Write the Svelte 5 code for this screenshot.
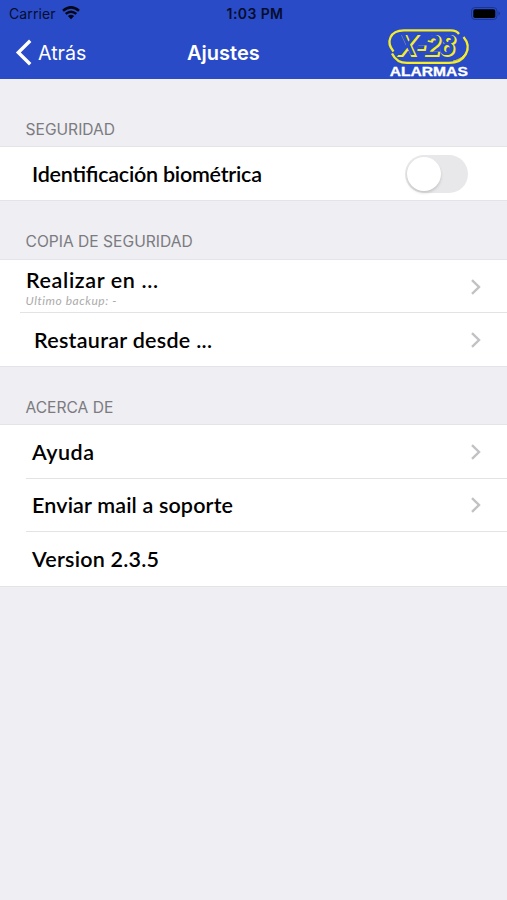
<script>
  const sections = [
    {
      title: 'SEGURIDAD',
      kind: 'security',
      rows: [{ label: 'Identificación biométrica', toggle: true, width: 230 }]
    },
    {
      title: 'COPIA DE SEGURIDAD',
      kind: 'backup',
      rows: [
        { label: 'Realizar en ...', detail: 'Ultimo backup: -', arrow: true, width: 132 },
        { label: 'Restaurar desde ...', arrow: true, width: 178 }
      ]
    },
    {
      title: 'ACERCA DE',
      kind: 'about',
      rows: [
        { label: 'Ayuda', arrow: true, width: 62 },
        { label: 'Enviar mail a soporte', arrow: true, width: 201 },
        { label: 'Version 2.3.5', width: 127 }
      ]
    }
  ];

  let biometric = $state(false);
</script>

<div class="screen">
  <header>
    <div class="status">
      <div class="carrier">
        <span>Carrier</span>
        <svg width="18" height="14" viewBox="0 0 18 14">
          <path d="M1 4.8Q9-2 17 4.8M3.7 7.9Q9 3.5 14.3 7.9" />
          <path class="solid" d="M5.9 10.1Q9 7.5 12.1 10.1L9 13.3Z" />
        </svg>
      </div>
      <span class="time">1:03 PM</span>
      <svg class="battery" width="30" height="14" viewBox="0 0 30 14">
        <rect class="shell" x="0.5" y="0.5" width="25.5" height="12" rx="3.5" />
        <rect x="2.3" y="2.3" width="22" height="8.8" rx="1.8" />
        <path class="cap" d="M27.5 4.3Q30.5 6.5 27.5 8.7Z" />
      </svg>
    </div>
    <nav>
      <button class="back">
        <svg width="17" height="27" viewBox="0 0 17 27">
          <path d="M15.2 1.8 3.3 13.5 15.2 25.2" />
        </svg>
        <span>Atrás</span>
      </button>
      <h1>Ajustes</h1>
      <svg class="logo" width="84" height="50" viewBox="0 0 84 50">
        <path class="ring" d="M6.5 24.5C-1.5 15 3 3.4 17 3.4H64Q69.5 3.4 72 7" />
        <path class="ring" d="M5 26.5Q9.5 35.9 20 35.9H62C78 35.9 86 21 76.5 10" />
        <path class="ring thin" d="M66 34.2C80 31 83 20 78.5 13" />
        <text class="mark outline" x="12.8" y="28.7" textLength="56" lengthAdjust="spacingAndGlyphs">X-28</text>
        <text class="mark" x="11.6" y="27.7" textLength="56" lengthAdjust="spacingAndGlyphs">X-28</text>
        <text class="brand" x="2.8" y="48.7" textLength="78" lengthAdjust="spacingAndGlyphs">ALARMAS</text>
      </svg>
    </nav>
  </header>

  {#each sections as section}
    <section class={section.kind}>
      <h2>{section.title}</h2>
      <div class="rows">
        {#each section.rows as row}
          <div class="row" class:detailed={row.detail}>
            <div class="label">
              <svg width={row.width} height="28">
                <text x="0" y="22" textLength={row.width}>{row.label}</text>
              </svg>
              {#if row.detail}
                <small>{row.detail}</small>
              {/if}
            </div>
            {#if row.toggle}
              <button
                class="switch"
                class:on={biometric}
                aria-label={row.label}
                aria-pressed={biometric}
                onclick={() => (biometric = !biometric)}
              ><span></span></button>
            {/if}
            {#if row.arrow}
              <svg class="arrow" width="12" height="18" viewBox="0 0 12 18">
                <path d="M2 2.2 9 9 2 15.8" />
              </svg>
            {/if}
          </div>
        {/each}
      </div>
    </section>
  {/each}
</div>

<style>
  :global(body) {
    background: #eeeef3;
  }
  .screen {
    min-height: 900px;
    background: #eeeef3;
    font-family: Inter, "Liberation Sans", sans-serif;
    color: #000;
  }
  svg {
    display: block;
    flex: none;
    overflow: visible;
  }
  button {
    border: 0;
    padding: 0;
    background: none;
    font: inherit;
    color: inherit;
  }
  header {
    box-sizing: border-box;
    height: 79px;
    background: #294bc8;
  }
  .status {
    display: grid;
    grid-template-columns: 1fr auto 1fr;
    align-items: center;
    height: 27px;
    padding: 0 6px 0 9px;
    font-size: 14px;
    color: #060d2c;
  }
  .carrier {
    display: flex;
    align-items: center;
    gap: 6px;
    letter-spacing: 0.1px;
  }
  .carrier svg {
    margin-top: -2px;
    fill: none;
    stroke: #030615;
    stroke-width: 2.5;
  }
  .carrier .solid {
    fill: #030615;
    stroke: none;
  }
  .time {
    font-weight: 600;
    font-size: 14px;
    letter-spacing: 0.4px;
  }
  .battery {
    justify-self: end;
  }
  .battery .shell {
    fill: none;
    stroke: #1c358f;
    stroke-width: 1;
  }
  .battery .cap {
    fill: #1c358f;
  }
  nav {
    display: grid;
    grid-template-columns: 187px 1fr 84px;
    height: 52px;
    padding-right: 36px;
    color: #fff;
  }
  .back {
    display: flex;
    align-items: center;
    gap: 6px;
    height: 51px;
    padding-left: 15px;
    font-size: 19.6px;
  }
  .back svg {
    fill: none;
    stroke: #fff;
    stroke-width: 3.4;
  }
  h1 {
    margin: 0;
    font-size: 20px;
    font-weight: 600;
    line-height: 52px;
  }
  .ring {
    fill: none;
    stroke: #f5ed2b;
    stroke-width: 2.3;
  }
  .ring.thin {
    stroke-width: 1;
  }
  .mark {
    font: bold italic 30px "Liberation Sans", sans-serif;
    fill: #294bc8;
  }
  .mark.outline {
    fill: #f5ed2b;
    stroke: #f5ed2b;
    stroke-width: 1.8;
  }
  .brand {
    font: bold 12px "Liberation Sans", sans-serif;
    fill: #fff;
    stroke: #fff;
    stroke-width: 0.3;
  }
  h2 {
    box-sizing: border-box;
    height: 60px;
    margin: 0;
    padding: 33px 0 0 25.5px;
    font-size: 15.6px;
    font-weight: 400;
    line-height: 18px;
    color: #7b7b80;
  }
  .security h2 {
    height: 68px;
    padding-top: 42px;
  }
  .about h2 {
    height: 59px;
  }
  .rows {
    background: #fff;
    box-shadow: 0 -1px #e4e4e8, 0 1px #e4e4e8;
  }
  .row {
    position: relative;
    display: flex;
    align-items: center;
    justify-content: space-between;
    box-sizing: border-box;
    height: 53px;
    padding: 0 25px 0 31.5px;
  }
  .about .row {
    height: 53.5px;
  }
  .backup .row {
    padding-left: 34px;
  }
  .backup .row.detailed {
    padding-left: 25.5px;
  }
  .row + .row::before {
    content: "";
    position: absolute;
    top: -1px;
    left: 26px;
    right: 0;
    height: 1px;
    background: #e3e3e5;
  }
  .backup .row + .row::before {
    left: 20px;
  }
  .label text {
    font: 600 21.5px Lato, "Open Sans", sans-serif;
  }
  small {
    display: block;
    font: italic 12px/14px Lato, "Open Sans", sans-serif;
    letter-spacing: 0.55px;
    color: #ababab;
  }
  .arrow {
    fill: none;
    stroke: #c2c2c5;
    stroke-width: 2.4;
  }
  .switch {
    box-sizing: border-box;
    width: 63px;
    height: 38px;
    margin-right: 14px;
    padding: 2px;
    border-radius: 19px;
    background: #e8e8ea;
  }
  .switch span {
    display: block;
    width: 34px;
    height: 34px;
    border-radius: 50%;
    background: #fff;
    box-shadow: 0 2px 3px rgba(0, 0, 0, 0.15);
  }
  .switch.on {
    background: #34c759;
  }
  .switch.on span {
    margin-left: 25px;
  }
</style>
